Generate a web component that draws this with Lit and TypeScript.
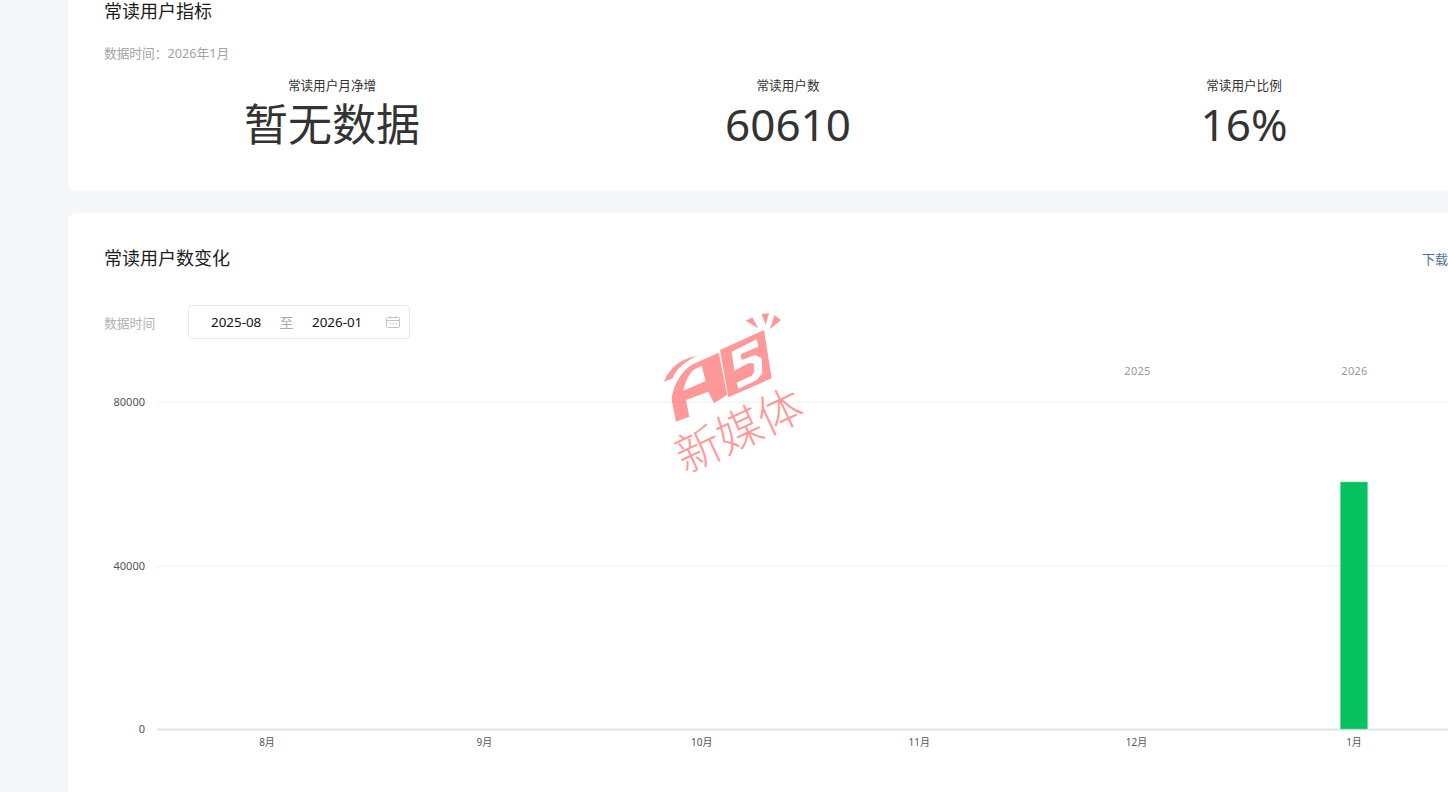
import { LitElement, html, css, svg } from "lit";
import { customElement } from "lit/decorators.js";

const CHART_LEFT = 104;
const CHART_TOP = 350;
const yTicks = [
  { label: "80000", y: 402 },
  { label: "40000", y: 566 },
  { label: "0", y: 729.5 },
];
const months = ["8月", "9月", "10月", "11月", "12月", "1月"];
const metrics = [
  { label: "常读用户月净增", value: "暂无数据" },
  { label: "常读用户数", value: "60610" },
  { label: "常读用户比例", value: "16%" },
];

@customElement("app-root")
export class AppRoot extends LitElement {
  static styles = css`
    :host {
      display: block;
      position: relative;
      width: 1448px;
      height: 792px;
      overflow: hidden;
      background: #f5f6f7;
      font-family: "Noto Sans", "Noto Sans CJK SC", sans-serif;
    }
    .page {
      display: flex;
      flex-direction: column;
      gap: 22px;
      padding-left: 68px;
    }
    .card {
      box-sizing: border-box;
      width: 1440px;
      padding: 0 36px;
      background: #fff;
      border-radius: 8px;
    }
    .card.top {
      height: 191px;
      border-radius: 0 0 8px 8px;
    }
    .card.chart-card {
      height: 640px;
      padding-top: 34px;
    }
    .title {
      margin: 0;
      font-size: 18px;
      line-height: 22px;
      font-weight: 400;
      color: #1c1c1c;
    }
    .sub {
      margin-top: 21px;
      font-size: 12.7px;
      line-height: 20px;
      color: #a3a3a3;
    }
    .metrics {
      display: grid;
      grid-template-columns: repeat(3, 456px);
      margin-top: 13px;
      text-align: center;
    }
    .metric-label {
      font-size: 12.6px;
      line-height: 20px;
      color: #333;
    }
    .metric-value {
      font-size: 44px;
      line-height: 56px;
      color: #333;
    }
    .head {
      display: flex;
      justify-content: space-between;
      align-items: center;
    }
    .download {
      font-size: 13px;
      color: #576b95;
      width: 50px;
      white-space: nowrap;
    }
    .filter {
      display: flex;
      align-items: center;
      margin-top: 36px;
    }
    .filter-label {
      width: 84px;
      font-size: 12.8px;
      line-height: 20px;
      color: #b2b2b2;
      margin-top: 2px;
    }
    .range {
      box-sizing: border-box;
      display: flex;
      align-items: center;
      width: 222px;
      height: 34px;
      padding-left: 22px;
      border: 1px solid #e7e7e7;
      border-radius: 4px;
      font-size: 13.4px;
      color: #111;
    }
    .date {
      width: 50px;
      text-align: center;
      white-space: nowrap;
    }
    .sep {
      width: 51px;
      text-align: center;
      color: #aaa;
      font-size: 14px;
    }
    .cal {
      margin-left: 24px;
    }
    .chart {
      display: block;
      margin-top: 11px;
      overflow: visible;
    }
    .chart text {
      font-family: "Noto Sans", "Noto Sans CJK SC", sans-serif;
    }
    .axis {
      font-size: 10px;
      fill: #555;
    }
    .axis.y {
      font-size: 11px;
    }
    .year {
      font-size: 11px;
      fill: #999;
      letter-spacing: 0.3px;
    }
    .mark {
      position: absolute;
      left: 640px;
      top: 300px;
      overflow: visible;
    }
    .mark g {
      fill: #ff3636;
      opacity: 0.5;
    }
    .mark text {
      font-family: "Noto Sans CJK SC", sans-serif;
      font-weight: 300;
      font-size: 136px;
    }
  `;

  private chart() {
    return html`<svg class="chart" width="1344" height="442" viewBox="0 0 1344 442">
      ${yTicks.map((t, i) => {
        const y = t.y - CHART_TOP;
        return svg`
          <line x1="${157 - CHART_LEFT}" x2="1344" y1="${y}" y2="${y}"
            stroke="${i === 2 ? "#e0e3e9" : "#eeeeee"}" stroke-width="${i === 2 ? 2 : 1}"></line>
          <text class="axis y" x="${145 - CHART_LEFT}" y="${y + 3.5}" text-anchor="end">${t.label}</text>`;
      })}
      ${months.map(
        (m, i) => svg`<text class="axis" x="${267 + i * 217.4 - CHART_LEFT}" y="${746 - CHART_TOP}" text-anchor="middle">${m}</text>`
      )}
      <text class="year" x="${1137.5 - CHART_LEFT}" y="${375 - CHART_TOP}" text-anchor="middle">2025</text>
      <text class="year" x="${1354.5 - CHART_LEFT}" y="${375 - CHART_TOP}" text-anchor="middle">2026</text>
      <rect x="${1340.5 - CHART_LEFT}" y="${482 - CHART_TOP}" width="27" height="247" fill="#07c160" stroke="#5fdc96" stroke-width="0.6"></rect>
    </svg>`;
  }

  render() {
    return html`
      <div class="page">
        <section class="card top">
          <h2 class="title">常读用户指标</h2>
          <div class="sub">数据时间：2026年1月</div>
          <div class="metrics">
            ${metrics.map(
              (m) => html`<div>
                <div class="metric-label">${m.label}</div>
                <div class="metric-value">${m.value}</div>
              </div>`
            )}
          </div>
        </section>
        <section class="card chart-card">
          <div class="head">
            <h2 class="title">常读用户数变化</h2>
            <span class="download">下载数据</span>
          </div>
          <div class="filter">
            <span class="filter-label">数据时间</span>
            <div class="range">
              <span class="date">2025-08</span>
              <span class="sep">至</span>
              <span class="date">2026-01</span>
              <svg class="cal" width="14" height="12" viewBox="0 0 14 12" fill="none" stroke="#c4c4c4">
                <rect x="0.5" y="1.5" width="13" height="10" rx="1"></rect>
                <path d="M0.5 4.5H13.5M4 0V2.5M10 0V2.5M3.5 7.5H5M6.5 7.5H8M9.5 7.5H11"></path>
              </svg>
            </div>
          </div>
          ${this.chart()}
        </section>
      </div>
      <svg class="mark" width="190" height="190" viewBox="0 0 570 570">
        <g>
          <path d="M72 245C90 200 125 175 170 168C135 185 110 205 98 235Z"></path>
          <path fill-rule="evenodd" d="M108 365L95 300C100 250 130 205 165 190L236 158L262 284L222 310L205 275L138 300L148 350ZM130 272L197 243L185 197L165 207C148 218 136 245 130 272Z"></path>
          <path fill-rule="evenodd" d="M240 150L372 90L395 235L265 292ZM275 155L350 118L355 140L302 163L305 180L345 165L365 175L367 220L350 240L295 267L290 248L335 227L343 215L341 190L325 190L283 212Z"></path>
          <path d="M317 62L337 52L355 85Z"></path>
          <path d="M365 42L387 40L377 75Z"></path>
          <path d="M403 45L423 60L390 88Z"></path>
          <text transform="translate(135 522) rotate(-25)" textLength="405">新媒体</text>
        </g>
      </svg>
    `;
  }
}
